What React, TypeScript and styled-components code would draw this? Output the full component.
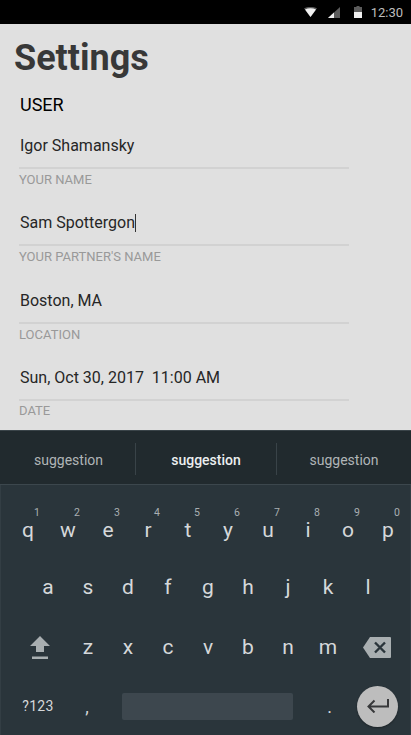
import React from "react";
import styled, { createGlobalStyle } from "styled-components";

const GlobalStyle = createGlobalStyle`
  html, body {
    margin: 0;
    padding: 0;
    background: #e0e0e0;
    font-family: Roboto, "Liberation Sans", sans-serif;
  }
  * {
    box-sizing: border-box;
  }
`;

const Screen = styled.div`
  width: 411px;
  height: 735px;
  display: flex;
  flex-direction: column;
  overflow: hidden;
`;

const StatusBar = styled.div`
  height: 24px;
  flex: none;
  background: #000;
  display: flex;
  align-items: center;
  justify-content: flex-end;
  padding-right: 8px;
  color: #bdbdbd;
  font-size: 13px;
`;

const StatusIcon = styled.svg<{ $gap: number }>`
  display: block;
  margin-right: ${(p) => p.$gap}px;
`;

const Content = styled.div`
  height: 406px;
  flex: none;
  background: #e0e0e0;
  padding: 14px 62px 0 14px;
`;

const Title = styled.h1`
  margin: 0;
  font-size: 36px;
  line-height: 40px;
  font-weight: 700;
  color: #383838;
`;

const SectionName = styled.div`
  margin: 13px 0 0 6px;
  height: 28px;
  font-size: 18px;
  line-height: 28px;
  font-weight: 400;
  color: #000;
`;

const Field = styled.div`
  margin-left: 5px;
  height: 77.3px;
  padding-top: 16px;
`;

const Value = styled.div`
  height: 32px;
  padding-left: 1px;
  font-size: 16px;
  line-height: 22px;
  color: #262626;
  white-space: pre;
`;

const Caret = styled.span`
  display: inline-block;
  width: 1px;
  height: 18px;
  background: #333;
  vertical-align: -4px;
`;

const Rule = styled.div`
  height: 2px;
  background: #d2d2d2;
`;

const Label = styled.div`
  margin-top: 3px;
  font-size: 13px;
  line-height: 16px;
  color: #999;

  ${Field}:last-child & {
    margin-top: 2px;
  }
`;

const Keyboard = styled.div`
  flex: 1;
  display: flex;
  flex-direction: column;
  background: #2a353b;
  box-shadow: inset 1px 0 0 #333e44, inset -1px 0 0 #333e44;
`;

const Suggestions = styled.div`
  height: 55px;
  flex: none;
  display: grid;
  grid-template-columns: 136px 141px 134px;
  align-items: center;
  padding-top: 3px;
  margin-bottom: 16px;
  background: #212a2e;
  border-top: 1px solid #3a4449;
  border-bottom: 1px solid #3c474d;
`;

const Suggestion = styled.div<{ $strong?: boolean; $divider?: boolean; $shift?: number }>`
  height: 32px;
  display: flex;
  align-items: center;
  justify-content: center;
  padding-top: 2px;
  padding-left: ${(p) => p.$shift ?? 0}px;
  font-size: 14px;
  font-weight: ${(p) => (p.$strong ? 500 : 400)};
  color: ${(p) => (p.$strong ? "#eceff0" : "#b0b5b7")};
  border-right: ${(p) => (p.$divider ? "1px solid #394348" : "none")};
`;

const KeyRow = styled.div<{ $inset: number; $height: number }>`
  height: ${(p) => p.$height}px;
  flex: none;
  display: flex;
  align-items: center;
  padding-left: ${(p) => p.$inset}px;
`;

const Key = styled.div<{ $width?: number }>`
  position: relative;
  width: ${(p) => p.$width ?? 40}px;
  height: 100%;
  flex: none;
  display: flex;
  align-items: center;
  justify-content: center;
  font-size: 21px;
  color: #d5d8da;
`;

const Hint = styled.span`
  position: absolute;
  top: 6px;
  right: 8px;
  font-size: 10.5px;
  line-height: 12px;
  color: #a9afb2;
`;

const ShiftKey = styled(Key)`
  margin-right: 8px;
`;

const SymbolKey = styled(Key)`
  font-size: 14px;
  letter-spacing: 0.3px;
`;

const CommaKey = styled(Key)`
  font-size: 18px;
  margin-right: 6px;
`;

const PeriodKey = styled(Key)`
  font-size: 18px;
  padding-left: 9px;
`;

const SpaceBar = styled.div`
  width: 171px;
  height: 27px;
  flex: none;
  border-radius: 2px;
  background: #3d474e;
`;

const EnterKey = styled.div`
  width: 41px;
  height: 41px;
  flex: none;
  border-radius: 50%;
  background: #bdbdbd;
  display: flex;
  align-items: center;
  justify-content: center;
  box-shadow: 0 1px 2px rgba(0, 0, 0, 0.35);
`;

const FIELDS = [
  { label: "YOUR NAME", value: "Igor Shamansky" },
  { label: "YOUR PARTNER'S NAME", value: "Sam Spottergon", focused: true },
  { label: "LOCATION", value: "Boston, MA" },
  { label: "DATE", value: "Sun, Oct 30, 2017  11:00 AM" },
];

const TOP_ROW = [
  ["q", "1"],
  ["w", "2"],
  ["e", "3"],
  ["r", "4"],
  ["t", "5"],
  ["y", "6"],
  ["u", "7"],
  ["i", "8"],
  ["o", "9"],
  ["p", "0"],
];

const App: React.FC = () => {
  return (
    <Screen>
      <GlobalStyle />
      <StatusBar>
        <StatusIcon $gap={11} width="13" height="10" viewBox="0 0 13 10">
          <path d="M0 1.2C3.5 -0.4 9.5 -0.4 13 1.2L6.5 10Z" fill="#5a5a5a" />
          <path d="M1 2.4C4.5 1 8.5 1 12 2.4L6.5 10Z" fill="#f0f0f0" />
        </StatusIcon>
        <StatusIcon $gap={14} width="12" height="11" viewBox="0 0 12 11">
          <path d="M12 0V11H0Z" fill="#5c5c5c" />
          <path d="M6 5.5V11H0Z" fill="#f0f0f0" />
        </StatusIcon>
        <StatusIcon $gap={9} width="8" height="12" viewBox="0 0 8 12">
          <path d="M2.5 0H5.5V1H8V12H0V1H2.5Z" fill="#5c5c5c" />
          <path d="M0 6H8V12H0Z" fill="#f0f0f0" />
        </StatusIcon>
        <span>12:30</span>
      </StatusBar>
      <Content>
        <Title>Settings</Title>
        <SectionName>USER</SectionName>
        {FIELDS.map((f) => (
          <Field key={f.label}>
            <Value>
              {f.value}
              {f.focused && <Caret />}
            </Value>
            <Rule />
            <Label>{f.label}</Label>
          </Field>
        ))}
      </Content>
      <Keyboard>
        <Suggestions>
          <Suggestion $divider $shift={2}>suggestion</Suggestion>
          <Suggestion $strong $divider>suggestion</Suggestion>
          <Suggestion>suggestion</Suggestion>
        </Suggestions>
        <KeyRow $inset={8} $height={58}>
          {TOP_ROW.map(([k, n]) => (
            <Key key={k}>
              {k}
              <Hint>{n}</Hint>
            </Key>
          ))}
        </KeyRow>
        <KeyRow $inset={28} $height={56}>
          {"asdfghjkl".split("").map((k) => (
            <Key key={k}>{k}</Key>
          ))}
        </KeyRow>
        <KeyRow $inset={20} $height={64}>
          <ShiftKey>
            <svg width="20" height="23" viewBox="0 0 20 23">
              <path d="M10 0L20 10H14V16H6V10H0Z" fill="#a9afb1" />
              <rect x="2" y="20.5" width="16" height="2.5" fill="#a9afb1" />
            </svg>
          </ShiftKey>
          {"zxcvbnm".split("").map((k) => (
            <Key key={k}>{k}</Key>
          ))}
          <Key $width={58}>
            <svg width="28" height="21" viewBox="0 0 28 21">
              <path d="M7 0H27a1 1 0 0 1 1 1V20a1 1 0 0 1-1 1H7L0 10.5Z" fill="#a9afb1" />
              <path d="M12 5.5L22 15.5M22 5.5L12 15.5" stroke="#2a353b" strokeWidth="2.4" />
            </svg>
          </Key>
        </KeyRow>
        <KeyRow $inset={18} $height={54}>
          <SymbolKey>?123</SymbolKey>
          <CommaKey $width={58}>,</CommaKey>
          <SpaceBar />
          <PeriodKey $width={64}>.</PeriodKey>
          <EnterKey>
            <svg width="22" height="14" viewBox="0 0 22 14">
              <path d="M21 0V7.5H2M7.5 1.5L1.5 7.5L7.5 13.5" fill="none" stroke="#37383a" strokeWidth="2" />
            </svg>
          </EnterKey>
        </KeyRow>
      </Keyboard>
    </Screen>
  );
};

export default App;
